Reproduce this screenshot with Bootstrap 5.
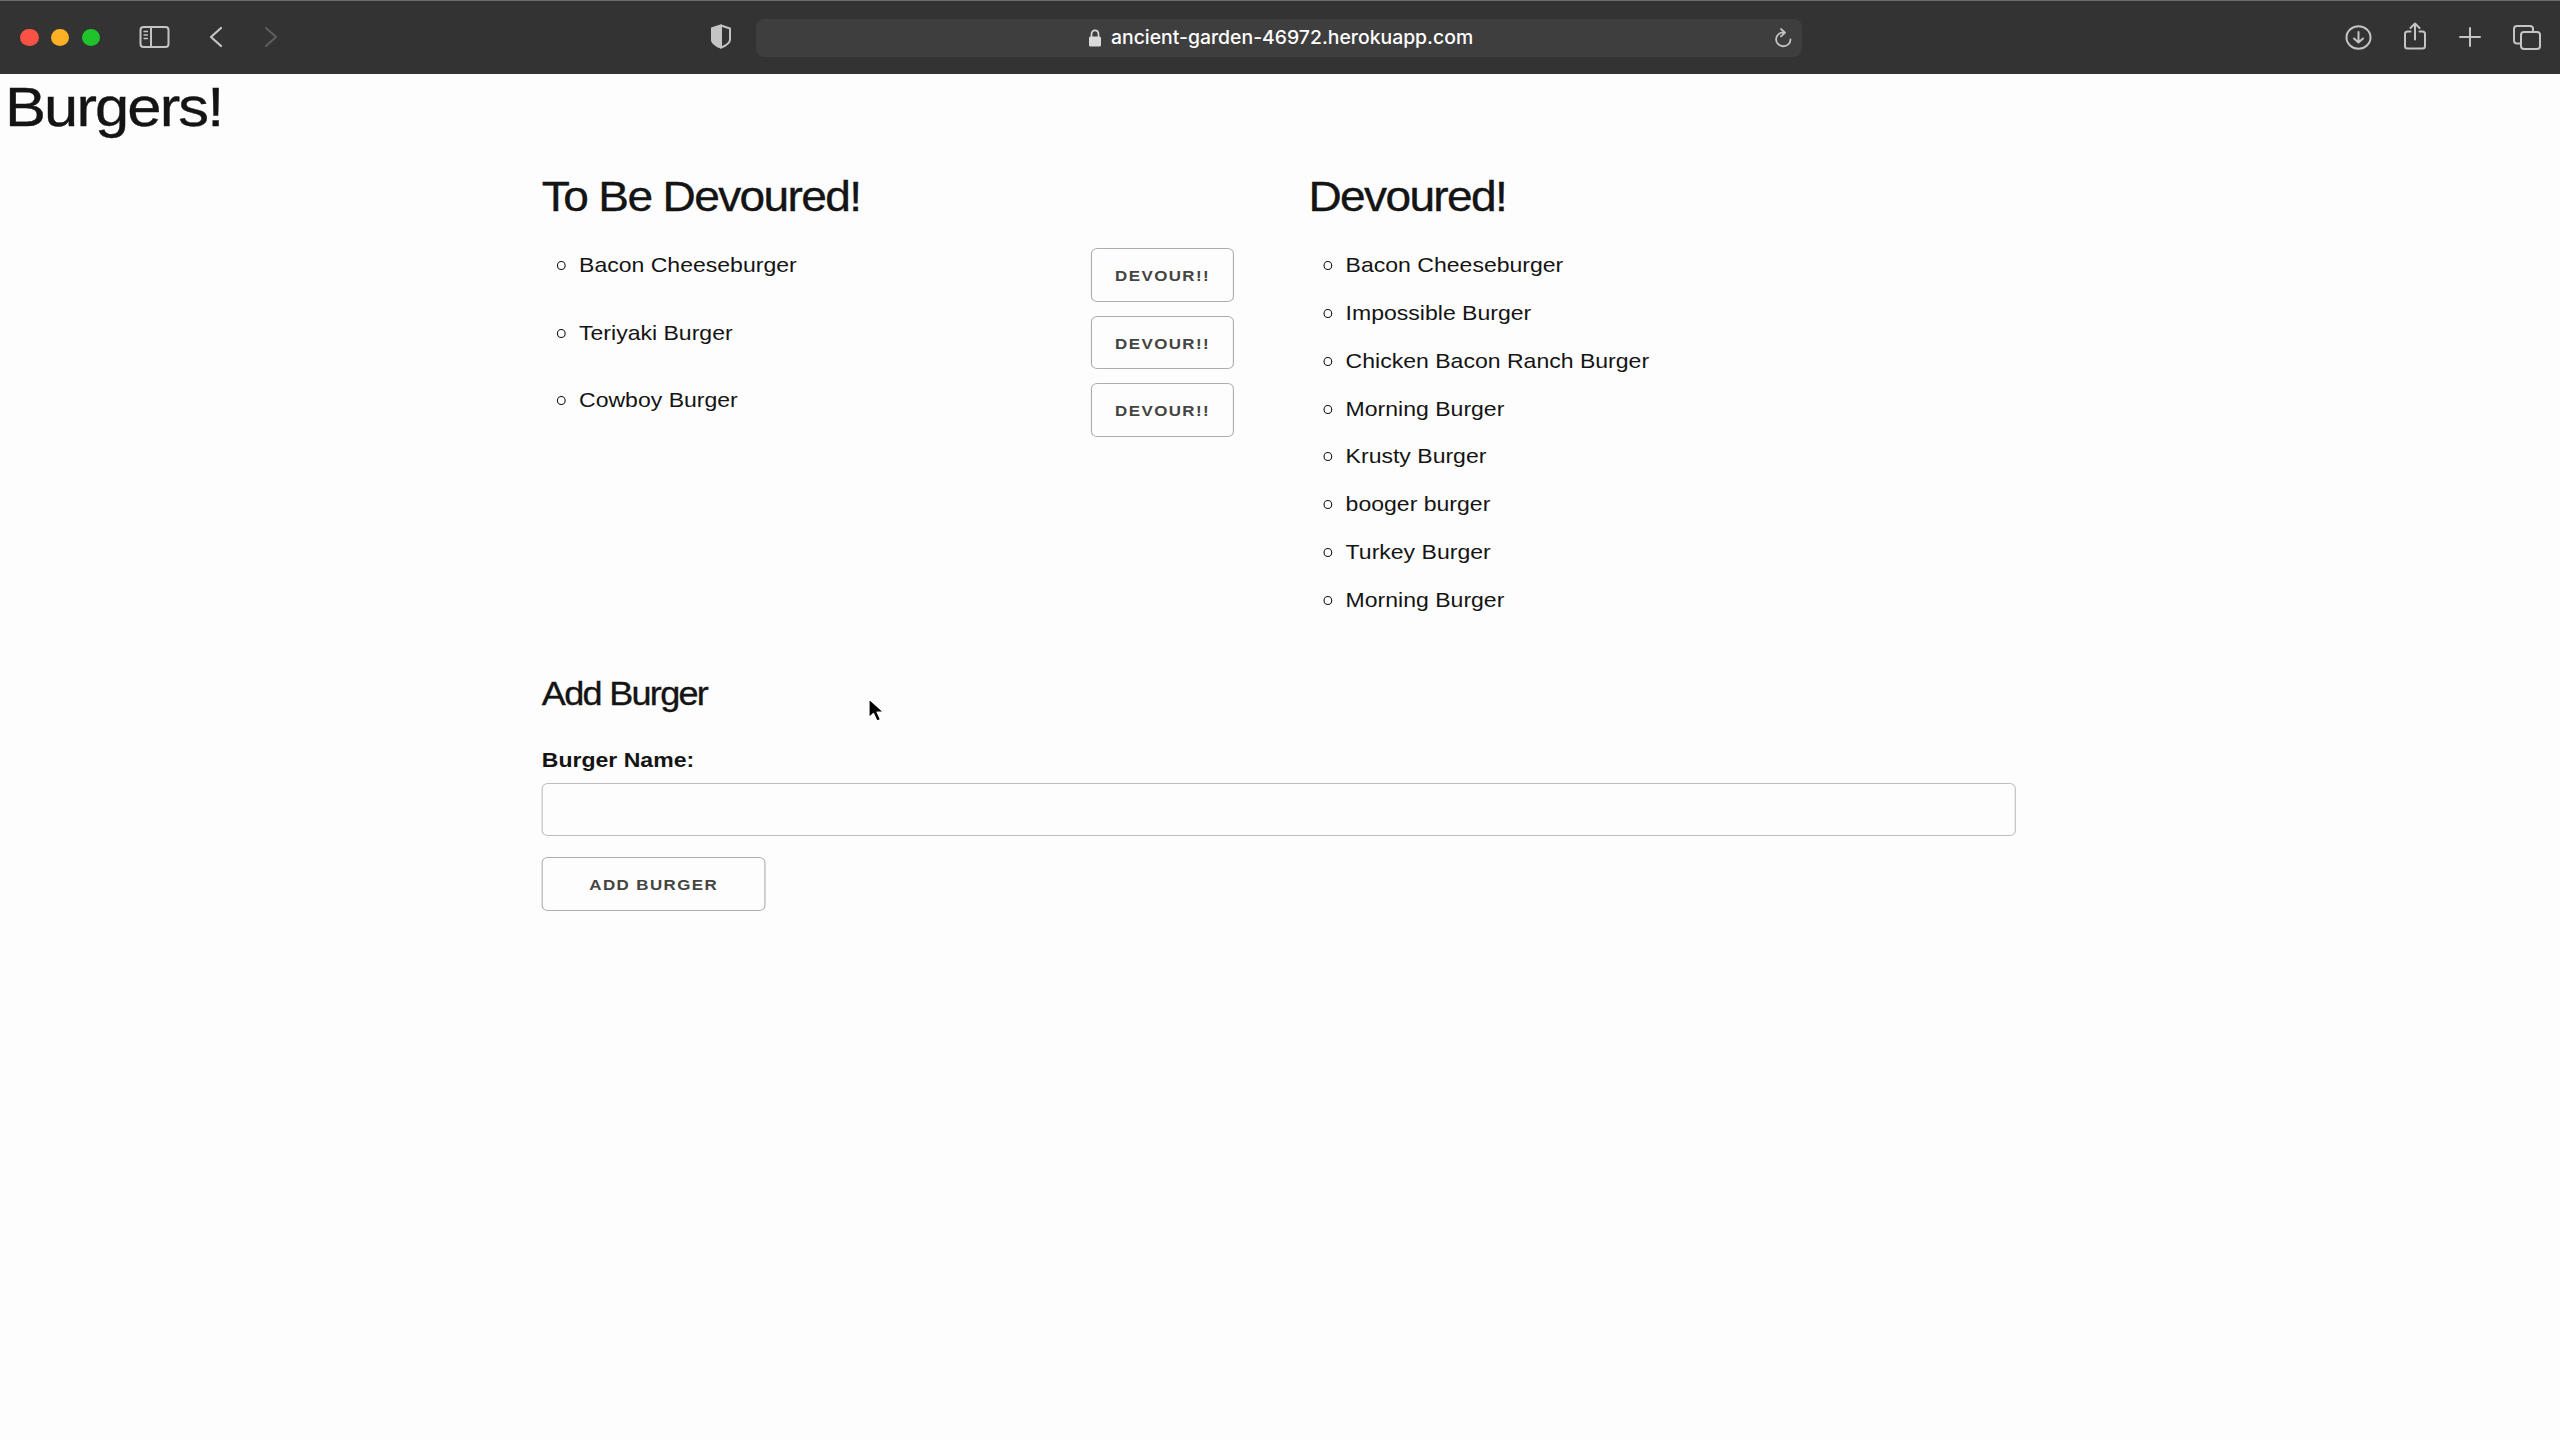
<!DOCTYPE html>
<html lang="en">
<head>
<meta charset="utf-8">
<title>Burgers!</title>
<link rel="stylesheet" href="https://cdn.jsdelivr.net/npm/bootstrap@5.3.0/dist/css/bootstrap.min.css">
<style>
html,body{height:100%;overflow:hidden}
body{background:#fdfdfd;color:#141414;font-family:"Liberation Sans",Arial,sans-serif;position:relative}
svg{display:block;fill:none;stroke:#c4c4c4;stroke-width:2;stroke-linecap:round;stroke-linejoin:round;flex:none}
/* browser toolbar */
.toolbar{height:74px;background:#333;border-top:1px solid #6c6c70}
.light{width:18.5px;height:17.5px;border-radius:50%}
.light-close{background:#fb5246}
.light-min{background:#fdb124}
.light-max{background:#1fc32c}
.tools-left{padding-left:20px}
.tools-left>svg{margin-left:39px;margin-bottom:2px}
.tools-left>svg.forward{margin-left:41px}
.tools-left>svg.shield{margin-left:432px}
.tools-right{padding-right:19px;margin-bottom:3px}
.address{width:1046px;height:38px;margin-left:24px;margin-top:1px;border-radius:8px;background:#3e3e3e;color:#fff;font:500 18.8px/38px Inter,sans-serif;position:relative}
.address .host{display:inline-block;margin-left:9px;transform:scaleX(1.032);transform-origin:0 50%}
.address .lock{margin-left:332px}
.reload{position:absolute;right:10px;top:9px}
/* page content, drawn wider than tall */
.page{width:calc(100% / 1.092);transform:scaleX(1.092);transform-origin:0 0}
h1,h2,h3{font-weight:400;-webkit-text-stroke:.35px #141414}
h1{font-size:56.3px;line-height:67.5px;letter-spacing:-1.7px;margin:-1px 0 29px;padding-left:4.5px}
.wrap{width:1350px;margin:0 auto;position:relative;left:-1px}
.wrap .row{--bs-gutter-x:54px}
h2{font-size:42.2px;line-height:54.8px;letter-spacing:-1.5px;margin:0 0 24px}
h3{font-size:33px;line-height:44px;letter-spacing:-1.55px;margin:0}
.burger{font-size:21.1px;line-height:33.8px;margin-bottom:14px;padding-left:13.5px}
.burger::before{content:"";width:8.4px;height:9px;border:1.5px solid #141414;border-radius:50%;margin:13px 12.2px 0 0;flex:none}
.btn-line{height:53.5px;border:1.5px solid #adadad;border-radius:5.6px;background:transparent;color:#444440;font-size:15.5px;font-weight:700;letter-spacing:1.3px;line-height:50px;padding:2px 0 0;text-transform:uppercase;text-align:center}
.devour{width:131px;margin-right:14px}
.add{width:205px;margin-top:21px}
.add-form{padding-top:41.5px}
.name-label{font-size:21.1px;font-weight:700;line-height:34px;margin-top:26.5px}
.name-input{height:53.5px;margin-top:6px;border:1.5px solid #bdbdbd;border-radius:5.6px;background:transparent}
.pointer{position:absolute;left:867px;top:697px}
</style>
<script src="https://cdn.jsdelivr.net/npm/bootstrap@5.3.0/dist/js/bootstrap.bundle.min.js"></script>
</head>
<body>
<header class="toolbar d-flex align-items-center justify-content-between">
  <div class="tools-left d-flex align-items-center">
    <div class="d-flex" style="gap:12.3px">
      <span class="light light-close"></span>
      <span class="light light-min"></span>
      <span class="light light-max"></span>
    </div>
    <svg width="31" height="22" viewBox="0 0 31 22"><rect x="1.500" y="1" width="28" height="20" rx="3"/><path d="M12 1v20"/><path d="M5 5.500h3.500M5 9h3.500M5 12.500h3.500" stroke-width="1.300"/></svg>
    <svg width="14" height="22" viewBox="0 0 14 22"><path d="M12 2 2 11l10 9" stroke-width="2.300"/></svg>
    <svg class="forward" width="14" height="22" viewBox="0 0 14 22"><path d="M2 2l10 9-10 9" stroke="#5e5e5e"/></svg>
    <svg class="shield" width="22" height="25" viewBox="0 0 22 25"><path d="M11 1.500 20 4.500v11c0 4-5 6.500-9 8-4-1.500-9-4-9-8v-11Z"/><path d="M11 1.500v22c-4-1.500-9-4-9-8v-11Z" fill="#c4c4c4"/></svg>
    <div class="address d-flex align-items-center">
      <svg class="lock" width="14" height="18" viewBox="0 0 14 18"><path d="M3.500 8V5.500c0-5.500 7-5.500 7 0V8" stroke="#dadada" stroke-width="1.700"/><rect x="1" y="7.500" width="12" height="10" rx="1.500" fill="#dadada" stroke="none"/></svg>
      <span class="host">ancient-garden-46972.herokuapp.com</span>
      <svg class="reload" width="18" height="20" viewBox="0 0 18 20"><path d="M10 4.500a7.200 6.900 0 1 0 6.500 6.900M7 1l4 3.700-4 3.700" stroke-width="1.800"/></svg>
    </div>
  </div>
  <div class="tools-right d-flex align-items-center">
    <svg width="27" height="25" viewBox="0 0 27 25" style="margin-top:3px"><ellipse cx="13.500" cy="12.500" rx="12" ry="11.200"/><path d="M13.500 7v10.500M9 13.500l4.500 4 4.500-4"/></svg>
    <svg width="24" height="28" viewBox="0 0 24 28" style="margin-left:31px"><path d="M7.500 9.500H4.500a2.500 2.500 0 0 0-2.500 2.500v12a2.500 2.500 0 0 0 2.500 2.500h15a2.500 2.500 0 0 0 2.500-2.500V12a2.500 2.500 0 0 0-2.500-2.500h-3M12 17.500V2M7.500 6 12 1.500 16.500 6"/></svg>
    <svg width="22" height="20" viewBox="0 0 22 20" style="margin-left:32px;margin-top:2px"><path d="M1 10h20M11 1v18"/></svg>
    <svg width="28" height="25" viewBox="0 0 28 25" style="margin-left:32px;margin-top:3px"><rect x="8" y="7" width="19" height="17" rx="3"/><path d="M8 18.500H4a3 3 0 0 1-3-3V4a3 3 0 0 1 3-3h13a3 3 0 0 1 3 3v3"/></svg>
  </div>
</header>

<main class="page">
  <h1>Burgers!</h1>
  <div class="wrap">
    <div class="row">
      <section class="col-6">
        <h2>To Be Devoured!</h2>
        <ul class="list-unstyled mb-0">
          <li class="burger d-flex"><span class="flex-grow-1">Bacon Cheeseburger</span><button class="btn-line devour">Devour!!</button></li>
          <li class="burger d-flex"><span class="flex-grow-1">Teriyaki Burger</span><button class="btn-line devour">Devour!!</button></li>
          <li class="burger d-flex"><span class="flex-grow-1">Cowboy Burger</span><button class="btn-line devour">Devour!!</button></li>
        </ul>
      </section>
      <section class="col-6">
        <h2>Devoured!</h2>
        <ul class="list-unstyled mb-0">
          <li class="burger d-flex">Bacon Cheeseburger</li>
          <li class="burger d-flex">Impossible Burger</li>
          <li class="burger d-flex">Chicken Bacon Ranch Burger</li>
          <li class="burger d-flex">Morning Burger</li>
          <li class="burger d-flex">Krusty Burger</li>
          <li class="burger d-flex">booger burger</li>
          <li class="burger d-flex">Turkey Burger</li>
          <li class="burger d-flex">Morning Burger</li>
        </ul>
      </section>
    </div>
    <form class="add-form">
      <h3>Add Burger</h3>
      <label class="name-label d-block" for="bu">Burger Name:</label>
      <input class="name-input d-block w-100" id="bu" type="text">
      <button class="btn-line add d-block" type="button">Add Burger</button>
    </form>
  </div>
</main>
<svg class="pointer" width="22" height="28" viewBox="0 0 22 28"><path d="M2 2v18.500l4.500-4 3.500 7.500 3.500-1.500-3.500-7.500h6.500Z" fill="#000" stroke="#fff" stroke-width="1.200"/></svg>
</body>
</html>
